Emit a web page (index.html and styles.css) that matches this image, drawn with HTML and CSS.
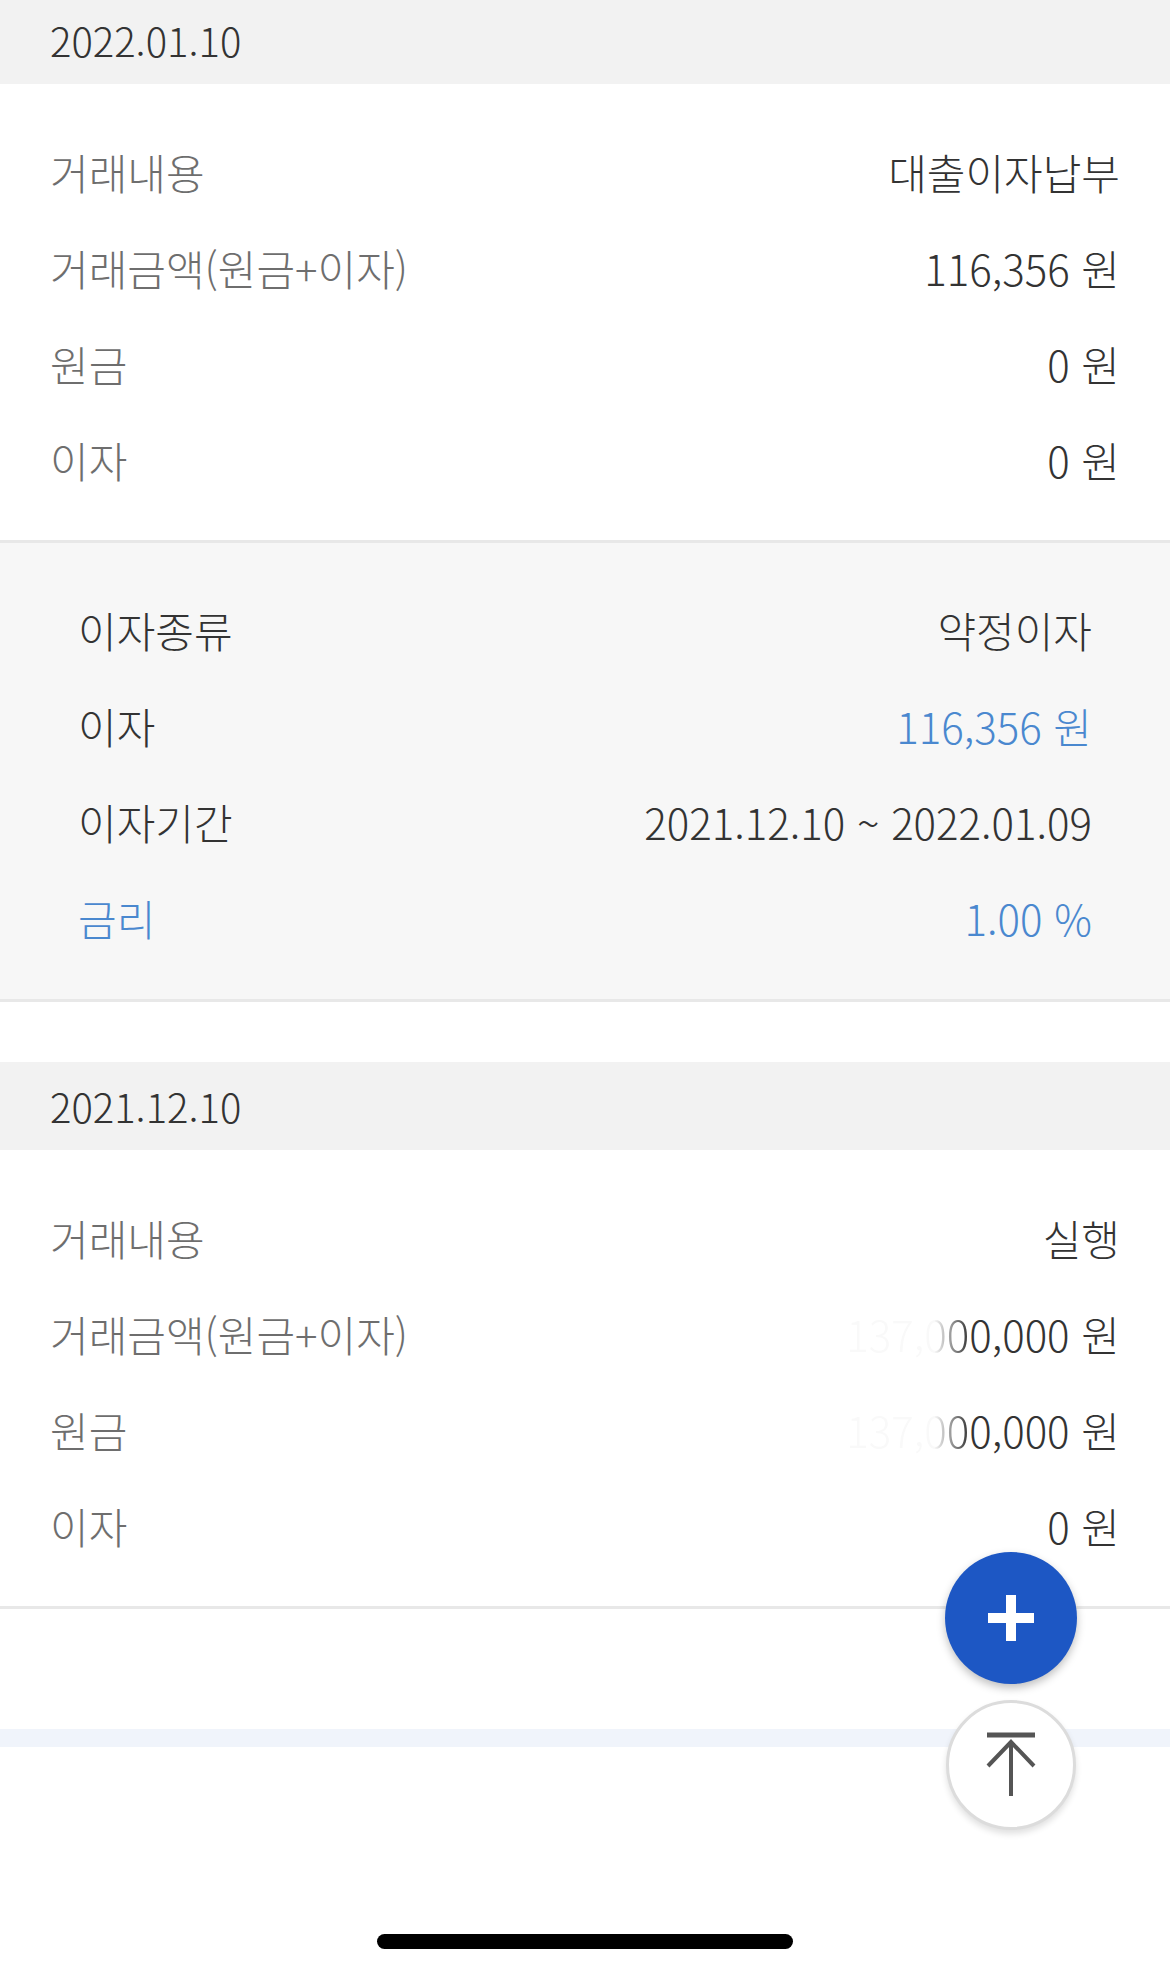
FILE: index.html
```html
<!DOCTYPE html>
<html lang="ko">
<head>
    <meta charset="UTF-8">
    <meta name="viewport" content="width=device-width, initial-scale=1.0">
    <title>거래내역</title>
    <link rel="stylesheet" href="styles.css">
</head>
<body>
    <div class="page">
        <div class="date-head date-head--first">2022.01.10</div>
        <div class="rows">
            <div class="row"><span class="label">거래내용</span><span class="value">대출이자납부</span></div>
            <div class="row"><span class="label">거래금액(원금+이자)</span><span class="value">116,356 원</span></div>
            <div class="row"><span class="label">원금</span><span class="value">0 원</span></div>
            <div class="row"><span class="label">이자</span><span class="value">0 원</span></div>
        </div>
        <div class="detail">
            <div class="row"><span class="label">이자종류</span><span class="value">약정이자</span></div>
            <div class="row"><span class="label">이자</span><span class="value blue">116,356 원</span></div>
            <div class="row"><span class="label">이자기간</span><span class="value">2021.12.10 ~ 2022.01.09</span></div>
            <div class="row"><span class="label blue">금리</span><span class="value blue">1.00 %</span></div>
        </div>

        <div class="date-head">2021.12.10</div>
        <div class="rows">
            <div class="row"><span class="label">거래내용</span><span class="value">실행</span></div>
            <div class="row"><span class="label">거래금액(원금+이자)</span><span class="value"><span class="masked">137,00</span>0,000 원</span></div>
            <div class="row"><span class="label">원금</span><span class="value"><span class="masked">137,00</span>0,000 원</span></div>
            <div class="row"><span class="label">이자</span><span class="value">0 원</span></div>
        </div>
        <div class="band"></div>
    </div>

    <div class="fabs">
        <button type="button" class="fab fab-add">
            <svg width="46" height="46" viewBox="0 0 46 46"><path d="M23 0v46M0 23h46" stroke="#fff" stroke-width="10"/></svg>
        </button>
        <button type="button" class="fab fab-top">
            <svg width="50" height="66" viewBox="0 0 50 66"><path d="M1 3h48" stroke="#555" stroke-width="5"/><path d="M2 34L25 10L48 34M25 10v54" fill="none" stroke="#555" stroke-width="4"/></svg>
        </button>
    </div>

    <div class="home-bar"></div>
</body>
</html>
```

FILE: styles.css
```css
body {
    margin: 0;
    position: relative;
    min-height: 1970px;
    background: #fff;
    font-family: "Noto Sans CJK KR", "Noto Sans", sans-serif;
    font-weight: 300;
    color: #333;
    overflow: hidden;
}
.page {
    display: flex;
    flex-direction: column;
}
.date-head {
    height: 88px;
    line-height: 88px;
    padding: 0 50px;
    background: #f2f2f2;
    font-size: 40px;
    color: #333;
    margin-top: 60px;
}
.date-head--first {
    margin-top: -4px;
}
.rows {
    padding: 39px 50px 33px;
    border-bottom: 3px solid #e8e8e8;
}
.rows .label {
    color: #6e6e6e;
}
.detail {
    padding: 38px 78px 34px;
    background: #f7f7f7;
    border-bottom: 3px solid #e8e8e8;
}
.row {
    display: flex;
    justify-content: space-between;
    align-items: center;
    height: 96px;
    font-size: 42px;
}
.value {
    color: #333;
}
.blue {
    color: #4a88cf;
}
.masked {
    -webkit-mask-image: linear-gradient(to right, rgba(0,0,0,0.03) 0, rgba(0,0,0,0.03) 72%, #000 100%);
    mask-image: linear-gradient(to right, rgba(0,0,0,0.03) 0, rgba(0,0,0,0.03) 72%, #000 100%);
}
.band {
    height: 18px;
    margin-top: 120px;
    background: #f0f4fb;
}
.fabs {
    position: absolute;
    top: 1552px;
    right: 93px;
    display: flex;
    flex-direction: column;
    align-items: center;
    gap: 16px;
}
.fab {
    display: flex;
    align-items: center;
    justify-content: center;
    border-radius: 50%;
    padding: 0;
    cursor: pointer;
}
.fab-add {
    width: 132px;
    height: 132px;
    border: none;
    background: #1d57c4;
    box-shadow: 0 4px 8px rgba(0,0,0,0.25);
}
.fab-top {
    width: 130px;
    height: 130px;
    border: 3px solid #dcdcdc;
    background: #fff;
    box-shadow: 0 4px 6px rgba(0,0,0,0.12);
}
.home-bar {
    position: absolute;
    left: 377px;
    bottom: 21px;
    width: 416px;
    height: 15px;
    border-radius: 8px;
    background: #000;
}
```
